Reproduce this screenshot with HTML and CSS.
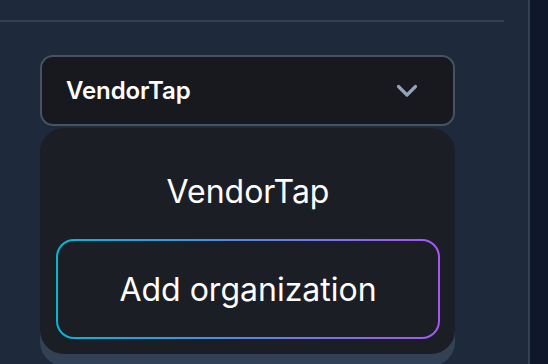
FILE: index.html
```html
<!DOCTYPE html>
<html>
<head>
<meta charset="utf-8">
<link rel="stylesheet" href="styles.css">
</head>
<body>
<div class="app">
  <main class="main">
    <div class="topbar"></div>
    <div class="content">
      <div class="select">
        <span class="select-label">VendorTap</span>
        <svg class="chevron" width="22" height="14" viewBox="0 0 22 14"><path d="M2.5 2.5 L11 11 L19.5 2.5" fill="none" stroke="#94a3b8" stroke-width="3.2" stroke-linecap="round" stroke-linejoin="round"/></svg>
      </div>
      <div class="menu">
        <div class="menu-item">VendorTap</div>
        <div class="menu-item add">Add organization</div>
      </div>
    </div>
  </main>
  <aside class="side"></aside>
</div>
</body>
</html>
```

FILE: styles.css
```css
html, body {
  margin: 0;
  padding: 0;
  height: 100%;
  overflow: hidden;
}
body {
  background: #1e293b;
  font-family: Inter, "Noto Sans", sans-serif;
  color: #ffffff;
}
.app {
  display: grid;
  grid-template-columns: 528px 2px 18px;
  height: 364px;
}
.main {
  display: flex;
  flex-direction: column;
}
.topbar {
  height: 20px;
  border-bottom: 2px solid #334155;
  margin-right: 24px;
}
.side {
  grid-column: 3;
  background: #0f172a;
  border-left: 2px solid #334155;
  margin-left: -2px;
}
.content {
  padding: 33px 0 0 40px;
  display: flex;
  flex-direction: column;
}
.select {
  box-sizing: border-box;
  width: 415px;
  height: 71px;
  background: #17191f;
  border: 2px solid #475263;
  border-radius: 13px;
  display: flex;
  align-items: center;
  justify-content: space-between;
  padding: 0 35px 0 24px;
}
.select-label {
  font-size: 24px;
  font-weight: 600;
  letter-spacing: -0.1px;
}
.chevron {
  display: block;
}
.menu {
  box-sizing: border-box;
  width: 415px;
  margin-top: 2px;
  height: 226px;
  background: #1c1e25;
  border-radius: 24px;
  box-shadow: 0 12px 0 0 #334155;
  padding: 16px 15px 15px 16px;
  display: flex;
  flex-direction: column;
}
.menu-item {
  height: 95px;
  display: flex;
  align-items: center;
  justify-content: center;
  font-size: 32px;
  font-weight: 400;
}
.menu-item.add {
  box-sizing: border-box;
  height: 100px;
  border: 2px solid transparent;
  border-radius: 18px;
  background:
    linear-gradient(#1c1e25, #1c1e25) padding-box,
    linear-gradient(90deg, #06b6d4, #a855f7) border-box;
}
```
